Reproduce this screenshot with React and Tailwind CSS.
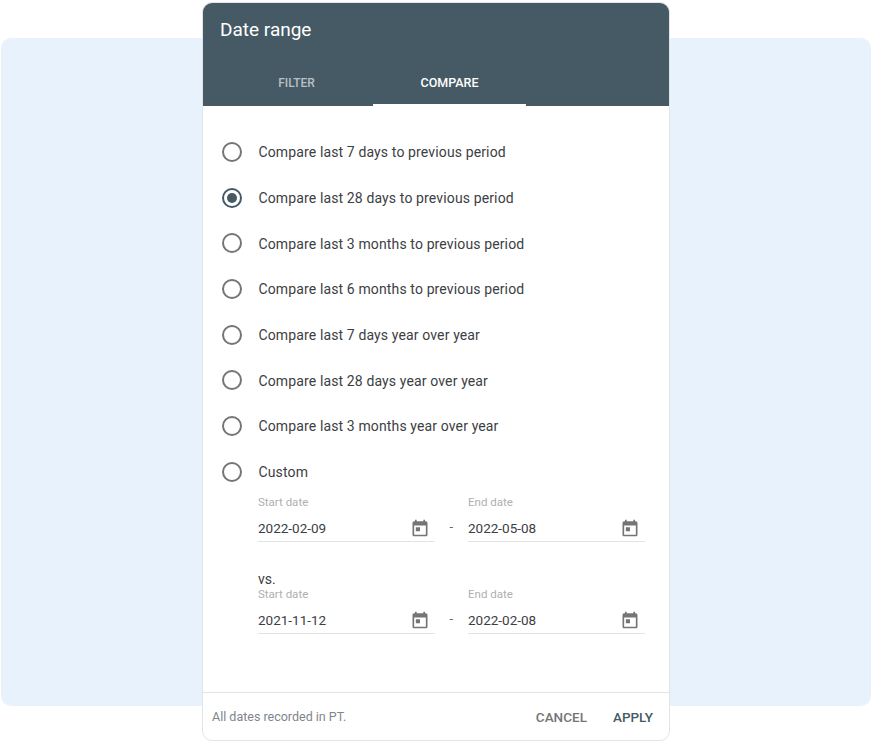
const compareOptions = [
  'Compare last 7 days to previous period',
  'Compare last 28 days to previous period',
  'Compare last 3 months to previous period',
  'Compare last 6 months to previous period',
  'Compare last 7 days year over year',
  'Compare last 28 days year over year',
  'Compare last 3 months year over year',
  'Custom',
];

function Radio({ checked }) {
  return (
    <span
      className={`flex h-5 w-5 shrink-0 items-center justify-center rounded-full border-2 ${
        checked ? 'border-[#455a64]' : 'border-[#757575]'
      }`}
    >
      {checked && <span className="h-2.5 w-2.5 rounded-full bg-[#455a64]" />}
    </span>
  );
}

function CalendarIcon() {
  return (
    <svg width="20" height="20" viewBox="0 0 24 24" fill="#757575" className="shrink-0">
      <path d="M19 4h-1V2h-2v2H8V2H6v2H5c-1.11 0-2 .9-2 2v14c0 1.1.89 2 2 2h14c1.1 0 2-.9 2-2V6c0-1.1-.9-2-2-2zm0 16H5V9h14v11zM7 11h5v5H7z" />
    </svg>
  );
}

function DateField({ label, value }) {
  return (
    <div className="w-[176.5px]">
      <div className="h-[14px] text-[11.5px] leading-[12px] text-[#b0b0b0]">{label}</div>
      <div className="mt-[6px] flex h-[26px] items-center justify-between border-b border-[#e3e3e3] pr-[5px]">
        <span className="text-[13.5px] text-[#3c4043]">{value}</span>
        <CalendarIcon />
      </div>
    </div>
  );
}

function DateRow({ start, end }) {
  return (
    <div className="flex items-end">
      <DateField label="Start date" value={start} />
      <span className="flex h-[26px] w-[33.5px] items-center justify-center pb-[4px] text-[13px] text-[#5f6368]">-</span>
      <DateField label="End date" value={end} />
    </div>
  );
}

export default function App() {
  return (
    <div
      className="relative h-[743px] w-[872px] overflow-hidden bg-white pb-[37px] pl-[1px] pr-[1px] pt-[38px]"
      style={{ fontFamily: 'Roboto, sans-serif' }}
    >
      <div className="h-full rounded-[10px] bg-[#e8f2fd]" />

      <div className="absolute left-[202px] top-[2px] flex h-[739px] w-[468px] flex-col overflow-hidden rounded-[10px] border border-[#e2e5e8] bg-white">
        <header className="h-[103px] shrink-0 bg-[#455a64] text-white">
          <h1 className="pl-[17px] pt-[15px] text-[19px] font-normal leading-[24px]">Date range</h1>
          <div className="mt-[25px] flex pl-[17px]">
            <div className="flex h-[39px] w-[153px] items-start justify-center pt-[7px] text-[12px] font-medium text-[#b7c0c5]">
              FILTER
            </div>
            <div className="flex h-[39px] w-[153px] items-start justify-center border-b-2 border-white pt-[7px] text-[12.5px] font-medium text-white">
              COMPARE
            </div>
          </div>
        </header>

        <main className="flex-1 pl-[19px] pt-[23px]">
          <ul>
            {compareOptions.map((option, i) => (
              <li key={option} className="flex h-[45.7px] items-center gap-[16.5px]">
                <Radio checked={i === 1} />
                <span className="pt-[2px] text-[14px] tracking-[0.13px] text-[#3c4043]">{option}</span>
              </li>
            ))}
          </ul>
          <div className="mt-[1px] pl-[36px]">
            <DateRow start="2022-02-09" end="2022-05-08" />
            <div className="mt-[31px] h-[15px] text-[14px] leading-[12px] text-[#3c4043]">vs.</div>
            <DateRow start="2021-11-12" end="2022-02-08" />
          </div>
        </main>

        <footer className="flex h-[48px] shrink-0 items-center justify-between border-t border-[#e3e3e3] pl-[9px] pr-[16px] pt-[2px]">
          <span className="text-[12.5px] text-[#80868b]">All dates recorded in PT.</span>
          <div className="flex gap-[26px] text-[13.5px] font-medium">
            <span className="text-[#757575]">CANCEL</span>
            <span className="text-[#455a64]">APPLY</span>
          </div>
        </footer>
      </div>
    </div>
  );
}
